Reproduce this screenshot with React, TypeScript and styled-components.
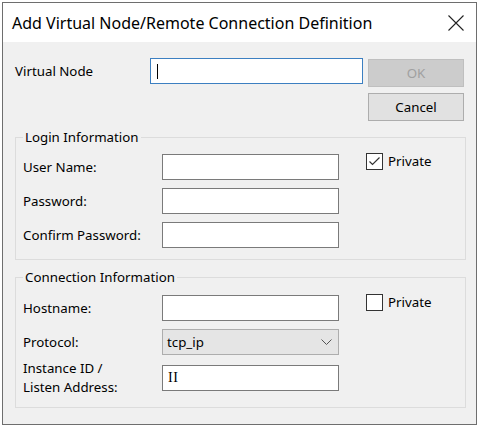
import React from "react";
import styled, { createGlobalStyle } from "styled-components";

const GlobalStyle = createGlobalStyle`
  html, body {
    margin: 0;
    padding: 0;
    background: #ffffff;
  }
  body {
    font-family: "Noto Sans", "Open Sans", sans-serif;
    font-size: 13.3px;
    color: #000000;
  }
`;

const Window = styled.div`
  margin: 2px;
  width: 475px;
  height: 423px;
  box-sizing: border-box;
  border: 1px solid #6e6e6e;
  display: flex;
  flex-direction: column;
  background: #f0f0f0;
`;

const TitleBar = styled.div`
  height: 39px;
  flex-shrink: 0;
  background: #ffffff;
  display: flex;
  align-items: center;
  justify-content: space-between;
  padding: 0 12px 0 9px;
`;

const Title = styled.div`
  font-size: 16px;
  color: #000000;
`;

const CloseButton = styled.div`
  width: 16px;
  height: 16px;
  display: flex;
  align-items: center;
  justify-content: center;
`;

const Body = styled.div`
  padding: 16px 0 0 12px;
`;

const TopRow = styled.div`
  display: flex;
  align-items: flex-start;
`;

const TopLabel = styled.div`
  width: 135px;
  line-height: 27px;
`;

const TextBox = styled.div<{ $focused?: boolean; $width?: number }>`
  box-sizing: border-box;
  width: ${(p) => p.$width ?? 177}px;
  height: 26px;
  background: #ffffff;
  border: 1px solid ${(p) => (p.$focused ? "#3c7fc1" : "#7a7a7a")};
  display: flex;
  align-items: center;
  padding-left: 5px;
`;

const Caret = styled.span`
  display: block;
  width: 1px;
  height: 15px;
  margin-left: 1px;
  background: #000000;
`;

const SerifText = styled.span`
  font-family: "Liberation Serif", "Times New Roman", serif;
  font-size: 14px;
  letter-spacing: 0.5px;
`;

const ButtonColumn = styled.div`
  display: flex;
  flex-direction: column;
  gap: 6px;
  margin: 1px 0 0 5px;
`;

const Button = styled.div<{ $disabled?: boolean }>`
  box-sizing: border-box;
  width: 96px;
  height: 28px;
  display: flex;
  align-items: center;
  justify-content: center;
  background: ${(p) => (p.$disabled ? "#cccccc" : "#e1e1e1")};
  border: 1px solid ${(p) => (p.$disabled ? "#bfbfbf" : "#adadad")};
  color: ${(p) => (p.$disabled ? "#a0a0a0" : "#000000")};
`;

const Group = styled.fieldset<{ $top: number; $padTop: number; $padBottom: number }>`
  box-sizing: border-box;
  width: 451px;
  margin: ${(p) => p.$top}px 0 0 0;
  padding: ${(p) => p.$padTop}px 7px ${(p) => p.$padBottom}px 7px;
  border: 1px solid #dcdcdc;
  display: flex;
  align-items: flex-start;
`;

const Legend = styled.legend`
  padding: 0 2px;
  line-height: 16px;
`;

const Fields = styled.div`
  display: grid;
  grid-template-columns: 139px 177px;
  row-gap: 8px;
  align-items: center;
`;

const FieldLabel = styled.div<{ $twoLine?: boolean }>`
  line-height: ${(p) => (p.$twoLine ? "19px" : "26px")};
  margin: ${(p) => (p.$twoLine ? "-4px 0" : "0")};
`;

const Select = styled.div`
  box-sizing: border-box;
  width: 177px;
  height: 26px;
  background: #e5e5e5;
  border: 1px solid #adadad;
  display: flex;
  align-items: center;
  justify-content: space-between;
  padding: 0 6px 0 4px;
`;

const CheckRow = styled.label`
  display: flex;
  align-items: center;
  gap: 5px;
  margin: -2px 0 0 27px;
`;

const CheckBox = styled.span`
  box-sizing: border-box;
  width: 17px;
  height: 17px;
  border: 1px solid #333333;
  background: #ffffff;
  display: flex;
  align-items: center;
  justify-content: center;
`;

const Check: React.FC<{ checked: boolean; label: string }> = ({ checked, label }) => (
  <CheckRow>
    <CheckBox>
      {checked && (
        <svg width="15" height="15" viewBox="0 0 15 15">
          <polyline points="2.5,7.5 5.5,10.5 12.5,3.5" fill="none" stroke="#333" strokeWidth="1.2" />
        </svg>
      )}
    </CheckBox>
    {label}
  </CheckRow>
);

export default function App() {
  return (
    <>
      <GlobalStyle />
      <Window>
        <TitleBar>
          <Title>Add Virtual Node/Remote Connection Definition</Title>
          <CloseButton>
            <svg width="16" height="16" viewBox="0 0 16 16">
              <path d="M0.5 0.5 L15.5 15.5 M15.5 0.5 L0.5 15.5" stroke="#222" strokeWidth="1.1" />
            </svg>
          </CloseButton>
        </TitleBar>
        <Body>
          <TopRow>
            <TopLabel>Virtual Node</TopLabel>
            <TextBox $focused $width={213}>
              <Caret />
            </TextBox>
            <ButtonColumn>
              <Button $disabled>OK</Button>
              <Button>Cancel</Button>
            </ButtonColumn>
          </TopRow>

          <Group $top={8} $padTop={9} $padBottom={11}>
            <Legend>Login Information</Legend>
            <Fields>
              <FieldLabel>User Name:</FieldLabel>
              <TextBox />
              <FieldLabel>Password:</FieldLabel>
              <TextBox />
              <FieldLabel>Confirm Password:</FieldLabel>
              <TextBox />
            </Fields>
            <Check checked label="Private" />
          </Group>

          <Group $top={9} $padTop={10} $padBottom={14}>
            <Legend>Connection Information</Legend>
            <Fields>
              <FieldLabel>Hostname:</FieldLabel>
              <TextBox />
              <FieldLabel>Protocol:</FieldLabel>
              <Select>
                tcp_ip
                <svg width="11" height="6" viewBox="0 0 11 6">
                  <polyline points="0.5,0.5 5.5,5.5 10.5,0.5" fill="none" stroke="#555" strokeWidth="1" />
                </svg>
              </Select>
              <FieldLabel $twoLine>
                Instance ID /
                <br />
                Listen Address:
              </FieldLabel>
              <TextBox>
                <SerifText>II</SerifText>
              </TextBox>
            </Fields>
            <Check checked={false} label="Private" />
          </Group>
        </Body>
      </Window>
    </>
  );
}
